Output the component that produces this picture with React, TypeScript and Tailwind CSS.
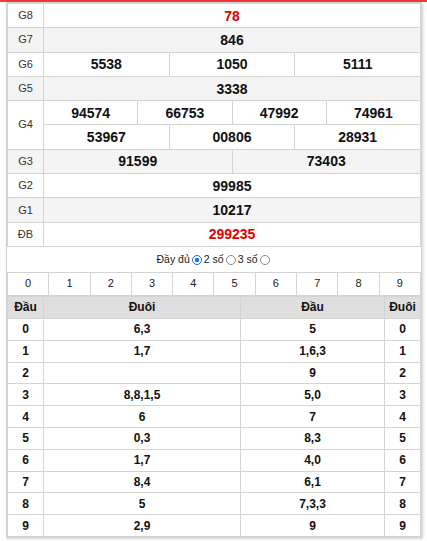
import React from 'react'

type Prize = { label: string; rows: string[][]; red?: boolean }

const prizes: Prize[] = [
  { label: 'G8', rows: [['78']], red: true },
  { label: 'G7', rows: [['846']] },
  { label: 'G6', rows: [['5538', '1050', '5111']] },
  { label: 'G5', rows: [['3338']] },
  { label: 'G4', rows: [['94574', '66753', '47992', '74961'], ['53967', '00806', '28931']] },
  { label: 'G3', rows: [['91599', '73403']] },
  { label: 'G2', rows: [['99985']] },
  { label: 'G1', rows: [['10217']] },
  { label: 'ĐB', rows: [['299235']], red: true }
]

const loto: [string, string, string, string][] = [
  ['0', '6,3', '5', '0'],
  ['1', '1,7', '1,6,3', '1'],
  ['2', '', '9', '2'],
  ['3', '8,8,1,5', '5,0', '3'],
  ['4', '6', '7', '4'],
  ['5', '0,3', '8,3', '5'],
  ['6', '1,7', '4,0', '6'],
  ['7', '8,4', '6,1', '7'],
  ['8', '5', '7,3,3', '8'],
  ['9', '2,9', '9', '9']
]

const cell = 'border border-[#d4d4d4] p-0 text-center leading-none'

function PrizeRow({ prize, index }: { prize: Prize; index: number }) {
  const bg = index % 2 === 1 ? 'bg-[#f4f4f4]' : 'bg-white'
  return (
    <>
      {prize.rows.map((nums, r) => (
        <tr key={r} className={bg}>
          {r === 0 && (
            <td rowSpan={prize.rows.length} className={`${cell} w-[36px] text-[11px] text-[#333]`}>
              {prize.label}
            </td>
          )}
          <td className={cell}>
            <div className="flex h-[23.3px]">
              {nums.map((n, i) => (
                <div
                  key={i}
                  className={`flex-1 flex items-center justify-center text-[14px] font-bold ${
                    i > 0 ? 'border-l border-[#d4d4d4]' : ''
                  } ${prize.red ? 'text-[#e00000]' : 'text-[#111]'}`}
                >
                  {n}
                </div>
              ))}
            </div>
          </td>
        </tr>
      ))}
    </>
  )
}

function Radio({ checked }: { checked?: boolean }) {
  return (
    <span
      className={`inline-block w-[10px] h-[10px] rounded-full border align-[-1px] mx-[2px] ${
        checked ? 'border-[#1a73e8] bg-[radial-gradient(circle,#1a73e8_35%,white_45%)]' : 'border-[#888] bg-white'
      }`}
    />
  )
}

export default function App() {
  return (
    <div className="border-t-2 border-[#f03a3a] bg-white min-h-[541px] font-['Liberation_Sans',Arial,sans-serif]">
      <div className="ml-[6px] w-[416px] border border-[#d4d4d4] shadow-[1px_1px_3px_rgba(0,0,0,0.18)]">
        <table className="w-full border-collapse table-fixed">
          <tbody>
            {prizes.map((p, i) => (
              <PrizeRow key={p.label} prize={p} index={i} />
            ))}
          </tbody>
        </table>
        <div className="h-[25px] pt-[1px] flex items-center justify-center text-[10.5px] text-[#222]">
          Đầy đủ <Radio checked />2 số <Radio />3 số <Radio />
        </div>
        <table className="w-full border-collapse table-fixed">
          <tbody>
            <tr>
              {['0', '1', '2', '3', '4', '5', '6', '7', '8', '9'].map(d => (
                <td key={d} className={`${cell} h-[23px] text-[11px] text-[#222]`}>
                  {d}
                </td>
              ))}
            </tr>
          </tbody>
        </table>
        <table className="w-full border-collapse table-fixed">
          <tbody>
            <tr className="bg-[#dedede] text-[12px] font-bold text-[#111]">
              <td className={`${cell} w-[36px] h-[22px]`}>Đầu</td>
              <td className={`${cell} w-[197px]`}>Đuôi</td>
              <td className={cell}>Đầu</td>
              <td className={`${cell} w-[36px]`}>Đuôi</td>
            </tr>
            {loto.map(row => (
              <tr key={row[0]} className="bg-white text-[12px] font-bold text-[#111]">
                {row.map((v, i) => (
                  <td key={i} className={`${cell} h-[21.8px]`}>
                    {v}
                  </td>
                ))}
              </tr>
            ))}
          </tbody>
        </table>
      </div>
    </div>
  )
}
